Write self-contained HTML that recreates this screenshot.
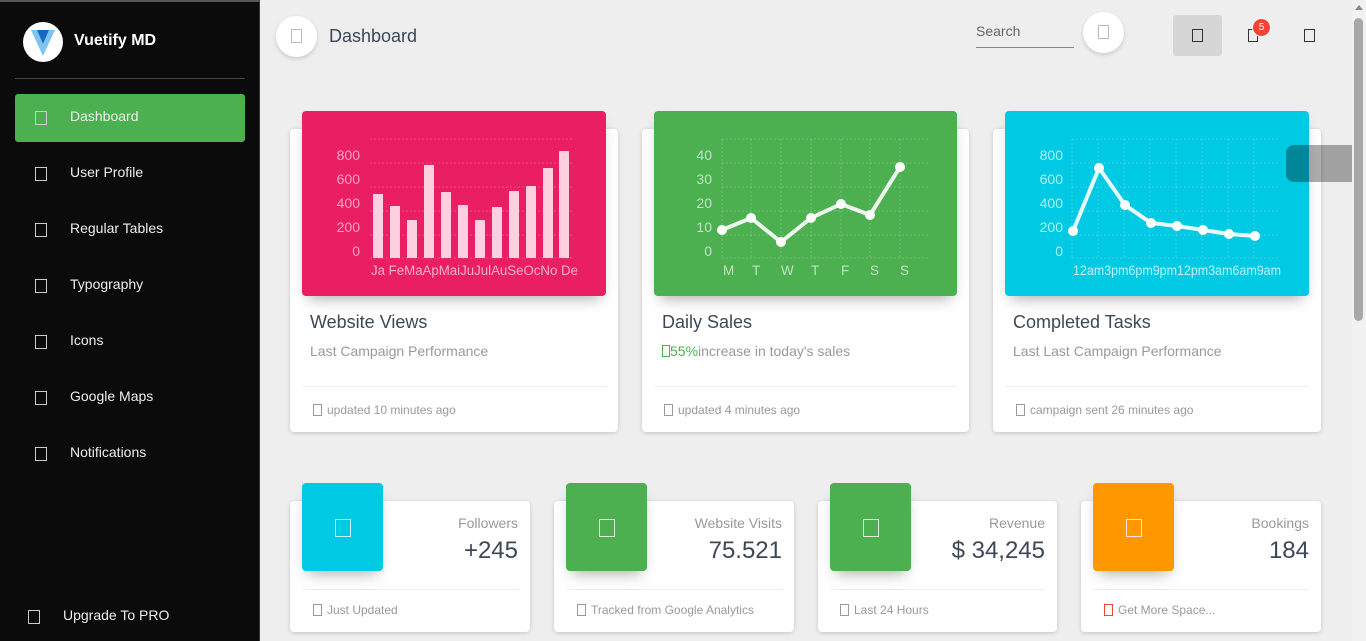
<!DOCTYPE html>
<html><head><meta charset="utf-8"><style>
*{box-sizing:border-box;margin:0;padding:0}
body{width:1366px;height:641px;overflow:hidden;background:#eeeeee;font-family:"Liberation Sans",sans-serif;position:relative;color:#3c4858}
.ab{position:absolute}
.sb{position:absolute;left:0;top:0;width:260px;height:641px;background:#0b0b0b;border-top:2px solid #555;border-right:1px solid #333}
.ic{display:inline-block;width:12px;height:14px;border:1.5px solid #ccc;position:absolute}
.nav{position:absolute;left:15px;width:230px;height:48px;color:#eee;font-size:14px;border-radius:3px}
.nav span.t{position:absolute;left:55px;top:14px}
.nav .ic{left:20px;top:17px}
.card{position:absolute;background:#fff;border-radius:4px;box-shadow:0 1px 4px rgba(0,0,0,.18)}
.hdr{position:absolute;border-radius:4px;box-shadow:0 8px 14px -6px rgba(0,0,0,.35)}
.ttl{position:absolute;font-size:18px;color:#3c4858;font-weight:300}
.sub{position:absolute;font-size:14px;color:#999}
.ft{position:absolute;font-size:12px;color:#999}
.ft .ic{border-color:#999;width:9px;height:12px;border-width:1px;left:-14px;top:1px}
.line{position:absolute;height:1px;background:#eee}
.sl{position:absolute;right:12px;font-size:14px;color:#999;text-align:right}
.sv{position:absolute;right:12px;font-size:24px;color:#3c4858;font-weight:300;text-align:right}
.box{position:absolute;width:81px;height:88px;border-radius:4px;box-shadow:0 8px 14px -6px rgba(0,0,0,.35)}
.box .ic{left:33px;top:36px;width:16px;height:18px;border-color:rgba(255,255,255,.8)}
svg text{font-family:"Liberation Sans",sans-serif}
</style></head><body>
<div class="sb">
 <div class="ab" style="left:23px;top:20px;width:40px;height:40px;border-radius:50%;background:#fff">
  <svg width="40" height="40" viewBox="0 0 40 40"><path d="M8 8 L20 34 L32 8 L26 8 L20 22 L14 8Z" fill="#7cc4f2"/><path d="M14 8 L20 22 L26 8Z" fill="#1867c0"/></svg>
 </div>
 <div class="ab" style="left:74px;top:30px;color:#fff;font-size:16px;font-weight:bold">Vuetify MD</div>
 <div class="ab" style="left:15px;top:76px;width:230px;height:1px;background:#444"></div>
 <div class="nav" style="top:92px;background:#4caf50"><i class="ic"></i><span class="t">Dashboard</span></div>
 <div class="nav" style="top:148px"><i class="ic"></i><span class="t">User Profile</span></div>
 <div class="nav" style="top:204px"><i class="ic"></i><span class="t">Regular Tables</span></div>
 <div class="nav" style="top:260px"><i class="ic"></i><span class="t">Typography</span></div>
 <div class="nav" style="top:316px"><i class="ic"></i><span class="t">Icons</span></div>
 <div class="nav" style="top:372px"><i class="ic"></i><span class="t">Google Maps</span></div>
 <div class="nav" style="top:428px"><i class="ic"></i><span class="t">Notifications</span></div>
 <div class="nav" style="top:591px;left:8px"><i class="ic"></i><span class="t">Upgrade To PRO</span></div>
</div>
<!-- toolbar -->
<div class="ab" style="left:276px;top:16px;width:41px;height:41px;border-radius:50%;background:#fff;box-shadow:0 2px 4px rgba(0,0,0,.15)"><i class="ic" style="left:15px;top:13px;border-color:#bbb;width:11px;height:14px;border-width:1px"></i></div>
<div class="ab" style="left:329px;top:26px;font-size:18px;color:#3c4858">Dashboard</div>
<div class="ab" style="left:976px;top:23px;font-size:14px;color:#666">Search</div>
<div class="ab" style="left:976px;top:47px;width:98px;height:1px;background:#888"></div>
<div class="ab" style="left:1083px;top:12px;width:41px;height:41px;border-radius:50%;background:#fff;box-shadow:0 2px 4px rgba(0,0,0,.15)"><i class="ic" style="left:15px;top:13px;border-color:#bbb;width:11px;height:14px;border-width:1px"></i></div>
<div class="ab" style="left:1173px;top:15px;width:49px;height:41px;border-radius:3px;background:#d6d6d6"><i class="ic" style="left:19px;top:14px;border-color:#333;width:11px;height:13px;border-width:1px"></i></div>
<i class="ic" style="left:1248px;top:29px;border-color:#333;width:10px;height:13px;border-width:1px"></i>
<div class="ab" style="left:1252px;top:18px;width:19px;height:19px;border-radius:50%;background:#f44336;border:1px solid #fff;color:#fff;font-size:10px;text-align:center;line-height:17px">5</div>
<i class="ic" style="left:1304px;top:29px;border-color:#333;width:11px;height:13px;border-width:1px"></i>
<!-- scrollbar -->
<div class="ab" style="left:1352px;top:0;width:14px;height:641px;background:#f1f1f1"></div>
<div class="ab" style="left:1354px;top:18px;width:9px;height:303px;background:#a8a8a8;border-radius:5px"></div>
<div class="ab" style="left:1355px;top:5px;width:0;height:0;border-left:4px solid transparent;border-right:4px solid transparent;border-bottom:5px solid #888"></div>

<!-- cards row 1 -->
<div class="card" style="left:290px;top:129px;width:328px;height:303px"></div>
<div class="card" style="left:642px;top:129px;width:327px;height:303px"></div>
<div class="card" style="left:993px;top:129px;width:328px;height:303px"></div>

<div class="hdr" style="left:302px;top:111px;width:304px;height:185px;background:#e91e63"></div>
<div class="hdr" style="left:654px;top:111px;width:303px;height:185px;background:#4caf50"></div>
<div class="hdr" style="left:1005px;top:111px;width:304px;height:185px;background:#00c9e3"></div>

<svg class="ab" style="left:0;top:0" width="1366" height="641">
 <g stroke="rgba(255,255,255,.2)" stroke-dasharray="2 2" stroke-width="1">
  <line x1="370" x2="572" y1="139" y2="139"/><line x1="370" x2="572" y1="163" y2="163"/><line x1="370" x2="572" y1="187" y2="187"/><line x1="370" x2="572" y1="211" y2="211"/><line x1="370" x2="572" y1="235" y2="235"/><line x1="370" x2="572" y1="258" y2="258"/>
 </g>
 <g fill="rgba(255,255,255,.6)" font-size="14" text-anchor="end"><text x="360" y="160">800</text><text x="360" y="184">600</text><text x="360" y="208">400</text><text x="360" y="232">200</text><text x="360" y="256">0</text></g>
 <g fill="#fcd0e0">
  <rect x="373" y="194" width="10" height="64"/><rect x="390" y="206" width="10" height="52"/><rect x="407" y="220" width="10" height="38"/><rect x="424" y="165" width="10" height="93"/><rect x="441" y="192" width="10" height="66"/><rect x="458" y="205" width="10" height="53"/><rect x="475" y="220" width="10" height="38"/><rect x="492" y="207" width="10" height="51"/><rect x="509" y="191" width="10" height="67"/><rect x="526" y="186" width="10" height="72"/><rect x="543" y="168" width="10" height="90"/><rect x="559" y="151" width="10" height="107"/>
 </g>
 <text x="371" y="275" fill="rgba(255,255,255,.65)" font-size="13.5" textLength="207" lengthAdjust="spacingAndGlyphs">Ja FeMaApMaiJuJulAuSeOcNo De</text>

 <g stroke="rgba(255,255,255,.2)" stroke-dasharray="2 2"><line x1="722" x2="928" y1="139" y2="139"/><line x1="722" x2="928" y1="163" y2="163"/><line x1="722" x2="928" y1="187" y2="187"/><line x1="722" x2="928" y1="211" y2="211"/><line x1="722" x2="928" y1="235" y2="235"/><line x1="722" x2="928" y1="258" y2="258"/>
 <line x1="722" x2="722" y1="139" y2="258"/><line x1="751" x2="751" y1="139" y2="258"/><line x1="781" x2="781" y1="139" y2="258"/><line x1="811" x2="811" y1="139" y2="258"/><line x1="841" x2="841" y1="139" y2="258"/><line x1="870" x2="870" y1="139" y2="258"/><line x1="900" x2="900" y1="139" y2="258"/></g>
 <g fill="rgba(255,255,255,.65)" font-size="14" text-anchor="end"><text x="712" y="160">40</text><text x="712" y="184">30</text><text x="712" y="208">20</text><text x="712" y="232">10</text><text x="712" y="256">0</text></g>
 <g fill="rgba(255,255,255,.65)" font-size="13.5"><text x="723" y="275">M</text><text x="752" y="275">T</text><text x="781" y="275">W</text><text x="811" y="275">T</text><text x="841" y="275">F</text><text x="870" y="275">S</text><text x="900" y="275">S</text></g>
 <polyline points="722,230 751,218 781,242 811,218 841,204 870,215 900,167" fill="none" stroke="#fff" stroke-opacity=".9" stroke-width="4"/>
 <g fill="#fff"><circle cx="722" cy="230" r="5"/><circle cx="751" cy="218" r="5"/><circle cx="781" cy="242" r="5"/><circle cx="811" cy="218" r="5"/><circle cx="841" cy="204" r="5"/><circle cx="870" cy="215" r="5"/><circle cx="900" cy="167" r="5"/></g>

 <g stroke="rgba(255,255,255,.22)" stroke-dasharray="2 2"><line x1="1072" x2="1280" y1="139" y2="139"/><line x1="1072" x2="1280" y1="163" y2="163"/><line x1="1072" x2="1280" y1="187" y2="187"/><line x1="1072" x2="1280" y1="211" y2="211"/><line x1="1072" x2="1280" y1="235" y2="235"/><line x1="1072" x2="1280" y1="258" y2="258"/>
 <line x1="1072" x2="1072" y1="139" y2="258"/><line x1="1098" x2="1098" y1="139" y2="258"/><line x1="1124" x2="1124" y1="139" y2="258"/><line x1="1150" x2="1150" y1="139" y2="258"/><line x1="1176" x2="1176" y1="139" y2="258"/><line x1="1202" x2="1202" y1="139" y2="258"/><line x1="1228" x2="1228" y1="139" y2="258"/><line x1="1254" x2="1254" y1="139" y2="258"/></g>
 <g fill="rgba(255,255,255,.7)" font-size="14" text-anchor="end"><text x="1063" y="160">800</text><text x="1063" y="184">600</text><text x="1063" y="208">400</text><text x="1063" y="232">200</text><text x="1063" y="256">0</text></g>
 <text x="1073" y="275" fill="rgba(255,255,255,.75)" font-size="14" textLength="208" lengthAdjust="spacingAndGlyphs">12am3pm6pm9pm12pm3am6am9am</text>
 <polyline points="1073,231 1099,168 1125,205 1151,223 1177,226 1203,230 1229,234 1255,236" fill="none" stroke="#fff" stroke-opacity=".9" stroke-width="4"/>
 <g fill="#fff"><circle cx="1073" cy="231" r="5"/><circle cx="1099" cy="168" r="5"/><circle cx="1125" cy="205" r="5"/><circle cx="1151" cy="223" r="5"/><circle cx="1177" cy="226" r="5"/><circle cx="1203" cy="230" r="5"/><circle cx="1229" cy="234" r="5"/><circle cx="1255" cy="236" r="5"/></g>
</svg>

<div class="ttl" style="left:310px;top:312px">Website Views</div>
<div class="sub" style="left:310px;top:343px">Last Campaign Performance</div>
<div class="line" style="left:302px;top:386px;width:304px"></div>
<div class="ft" style="left:327px;top:403px"><i class="ic"></i>updated 10 minutes ago</div>

<div class="ttl" style="left:662px;top:312px">Daily Sales</div>
<div class="sub" style="left:662px;top:343px"><span style="color:#4caf50"><i style="display:inline-block;width:8px;height:12px;border:1px solid #4caf50;vertical-align:-1px"></i>55%</span>increase in today's sales</div>
<div class="line" style="left:654px;top:386px;width:303px"></div>
<div class="ft" style="left:678px;top:403px"><i class="ic"></i>updated 4 minutes ago</div>

<div class="ttl" style="left:1013px;top:312px">Completed Tasks</div>
<div class="sub" style="left:1013px;top:343px">Last Last Campaign Performance</div>
<div class="line" style="left:1005px;top:386px;width:304px"></div>
<div class="ft" style="left:1030px;top:403px"><i class="ic"></i>campaign sent 26 minutes ago</div>

<div class="ab" style="left:1286px;top:145px;width:66px;height:37px;border-radius:8px 0 0 8px;background:rgba(0,0,0,.32)"></div>

<!-- stat cards -->
<div class="card" style="left:290px;top:501px;width:240px;height:131px"><div class="sl" style="top:14px">Followers</div><div class="sv" style="top:36px">+245</div><div class="line" style="left:12px;top:88px;width:216px"></div><div class="ft" style="left:37px;top:102px"><i class="ic"></i>Just Updated</div></div>
<div class="card" style="left:554px;top:501px;width:240px;height:131px"><div class="sl" style="top:14px">Website Visits</div><div class="sv" style="top:36px">75.521</div><div class="line" style="left:12px;top:88px;width:216px"></div><div class="ft" style="left:37px;top:102px"><i class="ic"></i>Tracked from Google Analytics</div></div>
<div class="card" style="left:818px;top:501px;width:239px;height:131px"><div class="sl" style="top:14px">Revenue</div><div class="sv" style="top:36px">$ 34,245</div><div class="line" style="left:12px;top:88px;width:215px"></div><div class="ft" style="left:36px;top:102px"><i class="ic"></i>Last 24 Hours</div></div>
<div class="card" style="left:1081px;top:501px;width:240px;height:131px"><div class="sl" style="top:14px">Bookings</div><div class="sv" style="top:36px">184</div><div class="line" style="left:12px;top:88px;width:216px"></div><div class="ft" style="left:37px;top:102px"><i class="ic" style="border-color:#f44336"></i>Get More Space...</div></div>

<div class="box" style="left:302px;top:483px;background:#00c9e3"><i class="ic"></i></div>
<div class="box" style="left:566px;top:483px;background:#4caf50"><i class="ic"></i></div>
<div class="box" style="left:830px;top:483px;background:#4caf50"><i class="ic"></i></div>
<div class="box" style="left:1093px;top:483px;background:#ff9800"><i class="ic"></i></div>
</body></html>
